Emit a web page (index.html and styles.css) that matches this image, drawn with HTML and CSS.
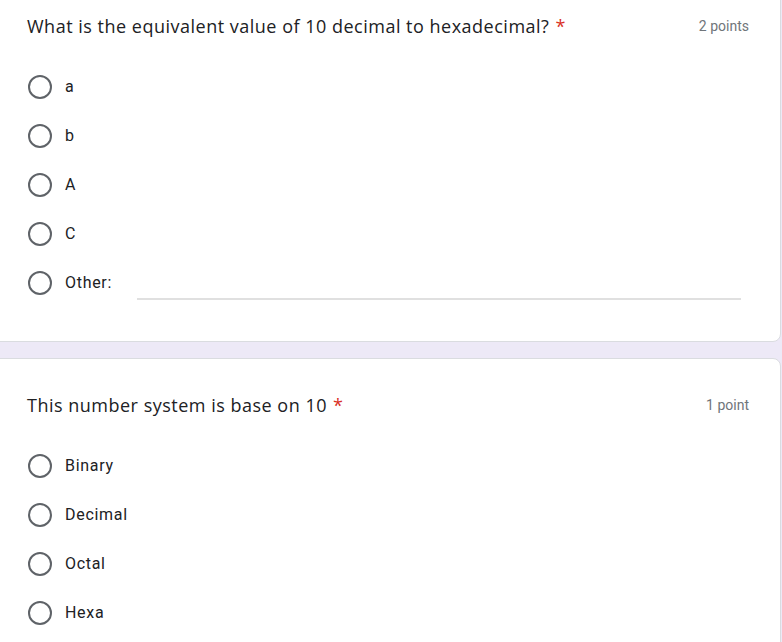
FILE: index.html
```html
<!DOCTYPE html>
<html>
<head>
<meta charset="utf-8">
<link rel="stylesheet" href="styles.css">
</head>
<body>
<div class="page">
  <section class="card card-first">
    <div class="q-head">
      <div class="q-title">What is the equivalent value of 10 decimal to hexadecimal?<span class="req">*</span></div>
      <div class="q-points">2 points</div>
    </div>
    <div class="options">
      <div class="opt"><span class="radio"></span><span class="label">a</span></div>
      <div class="opt"><span class="radio"></span><span class="label">b</span></div>
      <div class="opt"><span class="radio"></span><span class="label">A</span></div>
      <div class="opt"><span class="radio"></span><span class="label">C</span></div>
      <div class="opt"><span class="radio"></span><span class="label">Other:</span><span class="other-field"></span></div>
    </div>
  </section>
  <section class="card">
    <div class="q-head">
      <div class="q-title">This number system is base on 10<span class="req">*</span></div>
      <div class="q-points">1 point</div>
    </div>
    <div class="options">
      <div class="opt"><span class="radio"></span><span class="label">Binary</span></div>
      <div class="opt"><span class="radio"></span><span class="label">Decimal</span></div>
      <div class="opt"><span class="radio"></span><span class="label">Octal</span></div>
      <div class="opt"><span class="radio"></span><span class="label">Hexa</span></div>
    </div>
  </section>
</div>
</body>
</html>
```
FILE: styles.css
```css
html, body {
  margin: 0;
  padding: 0;
  background: #ede9f7;
}
body {
  font-family: Roboto, "Liberation Sans", sans-serif;
  color: #202124;
  overflow: hidden;
  height: 642px;
}
.page {
  display: flex;
  flex-direction: column;
  gap: 16px;
}
.card {
  background: #fff;
  border: 1px solid #dadce0;
  border-radius: 8px;
  margin-left: -10px;
  margin-right: 1px;
  padding: 34px 31px 34px 36px;
}
.card-first {
  margin-top: -21px;
}
.q-head {
  display: flex;
  justify-content: space-between;
  align-items: center;
  height: 24px;
}
.q-title {
  font-family: "Open Sans", Roboto, sans-serif;
  font-size: 18px;
  line-height: 24px;
  letter-spacing: 0.5px;
  color: #202124;
}
.req {
  color: #d93025;
  margin-left: 6px;
}
.q-points {
  font-size: 14px;
  color: #70757a;
}
.options {
  margin-top: 24px;
  display: flex;
  flex-direction: column;
}
.opt {
  display: flex;
  align-items: center;
  height: 49px;
}
.radio {
  width: 20px;
  height: 20px;
  border: 2px solid #5f6368;
  border-radius: 50%;
  flex: none;
  margin-left: 1px;
}
.label {
  font-size: 16px;
  margin-left: 13px;
  letter-spacing: 0.7px;
}
.other-field {
  flex: 1;
  height: 2px;
  background: #e0e0e0;
  margin-top: 33px;
  margin-left: 25px;
  margin-right: 8px;
}
```
